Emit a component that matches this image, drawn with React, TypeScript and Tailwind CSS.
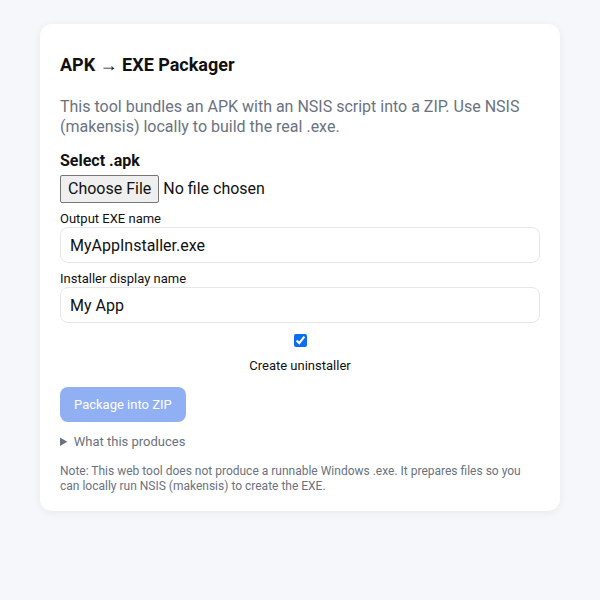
import { useState } from "react";

export default function App() {
  const [exeName, setExeName] = useState("MyAppInstaller.exe");
  const [displayName, setDisplayName] = useState("My App");
  const [uninstaller, setUninstaller] = useState(true);

  return (
    <div className="min-h-screen bg-[#f5f7fb] pt-6 font-['Roboto',sans-serif] text-[#111]">
      <div className="mx-auto w-[520px] rounded-xl bg-white px-5 pt-[29px] pb-[17px] shadow-[0_2px_10px_rgba(0,0,0,0.06)]">
        <h1 className="text-lg font-bold leading-6">APK → EXE Packager</h1>
        <p className="mt-5 text-base leading-5 text-[#6b7280]">
          This tool bundles an APK with an NSIS script into a ZIP. Use NSIS (makensis) locally to build the real .exe.
        </p>

        <div className="mt-[14px] text-base font-bold leading-5">Select .apk</div>
        <input
          type="file"
          accept=".apk"
          className="mt-[4px] block text-base leading-5 file:mr-1 file:rounded-[2px] file:border file:border-[#767676] file:bg-[#efefef] file:px-[7px] file:py-[1px] file:text-base"
        />

        <label className="mt-[8px] block text-[13px] leading-4">Output EXE name</label>
        <input
          value={exeName}
          onChange={(e) => setExeName(e.target.value)}
          className="block h-9 w-full rounded-lg border border-[#e5e7eb] px-[9px] text-base outline-none"
        />

        <label className="mt-[8px] block text-[13px] leading-4">Installer display name</label>
        <input
          value={displayName}
          onChange={(e) => setDisplayName(e.target.value)}
          className="block h-9 w-full rounded-lg border border-[#e5e7eb] px-[9px] text-base outline-none"
        />

        <label className="mt-[11px] flex flex-col items-center gap-[11px] text-[13px] leading-4">
          <input
            type="checkbox"
            checked={uninstaller}
            onChange={(e) => setUninstaller(e.target.checked)}
            className="h-[13px] w-[13px] accent-[#0b6cf5]"
          />
          Create uninstaller
        </label>

        <button
          disabled
          className="mt-[13px] block h-[35px] rounded-lg bg-[#2563eb] px-[14px] text-[13px] text-white opacity-50"
        >
          Package into ZIP
        </button>

        <details className="mt-[12px] text-[13px] leading-4 text-[#6b7280]">
          <summary className="cursor-pointer">What this produces</summary>
          <p className="mt-2">A ZIP containing your APK, an installer.nsi script and a README.</p>
        </details>

        <p className="mt-[14px] text-xs leading-[15px] text-[#6b7280]">
          Note: This web tool does not produce a runnable Windows .exe. It prepares files so you can locally run NSIS (makensis) to create the EXE.
        </p>
      </div>
    </div>
  );
}
